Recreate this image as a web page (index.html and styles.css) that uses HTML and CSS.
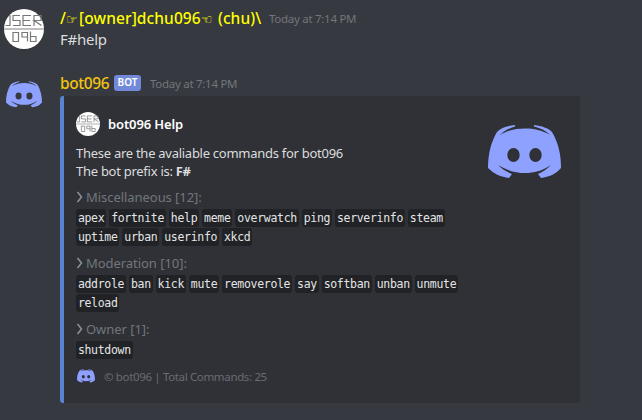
FILE: index.html
```
<!DOCTYPE html>
<html lang="en">
<head>
<meta charset="utf-8">
<title>Chat</title>
<link rel="stylesheet" href="styles.css">
</head>
<body>
<svg width="0" height="0" class="defs">
  <symbol id="user" viewBox="0 0 40 40">
    <circle cx="20" cy="20" r="20" fill="#fff"/>
    <g fill="none" stroke="#777" stroke-width="1.200">
      <path d="M6 6V16.500H1.500M16 6.500H9V11.500H16V16.500H9M27 6.500H19V16.500H27M19 11.500H26M30 17V6.500H37V11.500H30L37.500 16.500"/>
      <path d="M9 23.500H14.500V32.500H9ZM23.500 32.500V23.500H18V28H23.500M26.500 22.500V32.500H32V27.500H26.500"/>
    </g>
    <path d="M0 20H40" stroke="#aaa" stroke-width="1.600"/>
  </symbol>
  <symbol id="clyde" viewBox="0 0 73 54">
    <path fill="#8ea1ff" fill-rule="evenodd" d="M27 0C19 1 13 3 9 7C3 17 0 29 0 43C6 49 13 52 21 53L24 49C19 47 14 44 10 40C20 46 28 48 37 48C46 48 54 46 63 40C59 44 55 47 50 49L53 53C61 52 68 49 73 43C73 29 70 17 64 7C60 3 54 1 46 0V1.500C53 3 58 6 62 10C54 5 46 3.500 37 3.500C28 3.500 20 5 12 10C16 6 21 3 27 1.500ZM25.500 23A6.200 7 0 1 1 25.500 37A6.200 7 0 1 1 25.500 23ZM47.500 23A6.200 7 0 1 1 47.500 37A6.200 7 0 1 1 47.500 23Z"/>
  </symbol>
</svg>
<main class="chat">
  <article class="message">
    <div class="side"><svg class="avatar"><use href="#user"/></svg></div>
    <div class="body">
      <header class="head"><span class="name owner">/<i class="hand">☞</i>[owner]dchu096<i class="hand">☜</i> (chu)\</span><time>Today at 7:14 PM</time></header>
      <p class="content">F#help</p>
    </div>
  </article>
  <article class="message second">
    <div class="side"><svg class="logo"><use href="#clyde"/></svg></div>
    <div class="body">
      <header class="head"><span class="name bot">bot096</span><span class="tag">BOT</span><time>Today at 7:14 PM</time></header>
      <section class="embed">
        <div class="main">
          <div class="author"><svg class="mini"><use href="#user"/></svg><b>bot096 Help</b></div>
          <p class="desc">These are the avaliable commands for bot096<br>The bot prefix is: <b>F#</b></p>
          <h3><svg class="arrow" viewBox="0 0 8 12"><path d="M1.500 1L5.500 6L1.500 11"/></svg>Miscellaneous [12]:</h3>
          <div class="chips"><code>apex</code><code>fortnite</code><code>help</code><code>meme</code><code>overwatch</code><code>ping</code><code>serverinfo</code><code>steam</code><code>uptime</code><code>urban</code><code>userinfo</code><code>xkcd</code></div>
          <h3><svg class="arrow" viewBox="0 0 8 12"><path d="M1.500 1L5.500 6L1.500 11"/></svg>Moderation [10]:</h3>
          <div class="chips"><code>addrole</code><code>ban</code><code>kick</code><code>mute</code><code>removerole</code><code>say</code><code>softban</code><code>unban</code><code>unmute</code><code>reload</code></div>
          <h3><svg class="arrow" viewBox="0 0 8 12"><path d="M1.500 1L5.500 6L1.500 11"/></svg>Owner [1]:</h3>
          <div class="chips"><code>shutdown</code></div>
          <footer><svg class="tiny"><use href="#clyde"/></svg>© bot096 | Total Commands: 25</footer>
        </div>
        <svg class="thumb"><use href="#clyde"/></svg>
      </section>
    </div>
  </article>
</main>
</body>
</html>
```
FILE: styles.css
```
* { box-sizing: border-box; }
body { margin: 0; background: #36393f; font-family: "Noto Sans", sans-serif; color: #dcddde; }
p, h3 { margin: 0; font-weight: 400; }
svg { display: block; flex: none; }
.defs { position: absolute; }
.chat { height: 420px; padding-top: 8px; overflow: hidden; white-space: nowrap; }
.message { display: flex; }
.second { margin-top: 22px; }
.side { width: 60px; flex: none; }
.avatar { width: 40px; height: 40px; margin: 1px 0 0 4px; }
.logo { width: 36px; height: 27px; margin: 7px 0 0 6px; }
.head { display: flex; height: 22px; line-height: 20px; align-items: flex-start; }
.name { font-size: 15.500px; font-weight: 500; }
.owner { color: #ff0; width: 202px; letter-spacing: 0.1px; }
.hand { display: inline-block; width: 13px; font: bold 13px/12px "DejaVu Sans", sans-serif; letter-spacing: 0; }
.bot { color: #f1c40f; width: 51px; line-height: 19px; letter-spacing: -0.4px; }
.tag { margin: 1px 9px 0 3px; width: 27px; height: 16px; border-radius: 3px; background: #7289da; color: #fff; font-size: 10px; font-weight: 600; line-height: 15px; text-align: center; }
time { margin: 1px 0 0 7px; font-size: 11.500px; letter-spacing: -0.28px; color: #72767d; }
.tag + time { margin: 0; }
.content { height: 22px; line-height: 19px; font-size: 15px; letter-spacing: -0.25px; }
.embed { display: flex; justify-content: space-between; width: 520px; height: 307px; border-left: 4px solid #5883d1; border-radius: 3px; background: #2f3136; padding: 16px 19px 0 12px; }
.main { width: 400px; }
.author { display: flex; align-items: center; height: 24px; gap: 8px; font-size: 13px; color: #fff; }
.author b { font-weight: 600; letter-spacing: -0.12px; }
.mini { width: 24px; height: 24px; }
.desc { margin-top: 8px; font-size: 13px; line-height: 18px; letter-spacing: -0.27px; }
h3 { display: flex; align-items: center; height: 18px; font-size: 13px; letter-spacing: -0.05px; color: #72767d; }
.desc + h3, .chips + h3 { margin-top: 8px; }
.arrow { width: 8px; height: 12px; margin-right: 2px; fill: none; stroke: #8a8e95; stroke-width: 1.600; }
.chips { display: flex; flex-wrap: wrap; gap: 1px 3px; margin-top: 3px; width: 392px; }
code { height: 18px; padding: 0 1.900px; border-radius: 3px; background: #202225; font: 11.500px/18px "DejaVu Sans Mono", monospace; letter-spacing: -0.31px; color: #e4e5e6; }
footer { display: flex; align-items: center; height: 20px; margin-top: 7px; font-size: 11.500px; color: #686c73; letter-spacing: -0.35px; }
.tiny { width: 18px; height: 14px; margin: 0 9px 0 1px; }
.thumb { width: 73px; height: 54px; margin-top: 13px; }
```
